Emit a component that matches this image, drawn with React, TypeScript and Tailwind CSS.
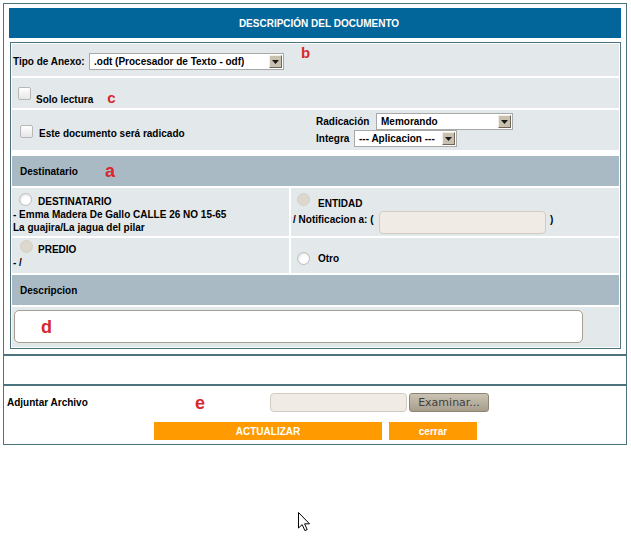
// Document description form (radicación / destinatario / adjuntar archivo)

import clsx from 'clsx'

function Checkbox({ className }: { className?: string }) {
  return (
    <span
      className={clsx(
        'block h-[13px] w-[13px] shrink-0 rounded-[2px] border border-[#b7b7b7] bg-linear-to-b from-white to-[#e6e6e6]',
        className
      )}
    />
  )
}

function Radio({ disabled, className }: { disabled?: boolean; className?: string }) {
  return (
    <span
      className={clsx(
        'block h-[13px] w-[13px] shrink-0 rounded-full border',
        disabled
          ? 'border-[#d5d0c5] bg-[#dcd8ce]'
          : 'border-[#bcbcbc] bg-white shadow-[inset_1px_1px_2px_rgba(0,0,0,0.12)]',
        className
      )}
    />
  )
}

function FakeSelect({ value, className }: { value: string; className: string }) {
  return (
    <div
      className={clsx(
        'flex h-[17px] items-center justify-between border border-[#a8a8a8] bg-white pl-[4px] pr-[1px]',
        className
      )}
    >
      <span className="truncate">{value}</span>
      <span className="flex h-[13px] w-[13px] shrink-0 items-center justify-center border border-t-[#f4f0e8] border-l-[#f4f0e8] border-r-[#6e6759] border-b-[#6e6759] bg-[#c9c0af]">
        <svg width="7" height="4" viewBox="0 0 7 4">
          <path d="M0 0h7L3.5 4z" fill="#1a1a1a" />
        </svg>
      </span>
    </div>
  )
}

const mark = "font-['Liberation_Sans',Arial,sans-serif] font-bold leading-none text-[#d7282e]"

export default function App() {
  return (
    <div className="relative h-[542px] w-[631px] bg-white pt-[3px] font-['Liberation_Sans',Arial,sans-serif] text-[10px] leading-[13px] font-bold text-black">
      <div className="ml-[3px] w-[624px] border border-[#4d737e]">
        {/* Section A: document description */}
        <div className="border-b-2 border-[#4d737e] px-[5px] pt-[4px] pb-[5px]">
          <div className="flex h-[30px] items-center justify-center bg-[#03669a] pl-[8px] text-white">
            DESCRIPCIÓN DEL DOCUMENTO
          </div>

          <div className="mt-[4px] ml-[1px] flex flex-col gap-[2px] border border-[#4d737e] p-[1px]">
            {/* Tipo de anexo */}
            <div className="flex h-[32px] items-center bg-[#e3e8eb] pt-[3px] pl-[1px]">
              <span className="w-[76px]">Tipo de Anexo:</span>
              <FakeSelect value=".odt (Procesador de Texto - odf)" className="w-[195px]" />
              <span className={clsx(mark, 'ml-[17px] -mt-[2px] self-start text-[15px]')}>b</span>
            </div>

            {/* Solo lectura */}
            <div className="flex h-[30px] items-start bg-[#e3e8eb] pt-[9px] pl-[6px]">
              <Checkbox />
              <span className="mt-[3px] ml-[5px] flex items-baseline">
                Solo lectura
                <span className={clsx(mark, 'ml-[14px] text-[15px]')}>c</span>
              </span>
            </div>

            {/* Radicado */}
            <div className="flex h-[40px] bg-[#e3e8eb]">
              <div className="flex w-[304px] items-start pt-[15px] pl-[8px]">
                <Checkbox />
                <span className="mt-[2px] ml-[6px]">Este documento será radicado</span>
              </div>
              <div className="flex flex-col pt-[3px]">
                <div className="flex h-[17px] items-center">
                  <span className="w-[60px]">Radicación</span>
                  <FakeSelect value="Memorando" className="w-[137px]" />
                </div>
                <div className="flex h-[17px] items-center">
                  <span className="w-[38px]">Integra</span>
                  <FakeSelect value="--- Aplicacion ---" className="w-[103px]" />
                </div>
              </div>
            </div>

            <div className="h-[2px] bg-white" />

            {/* Destinatario */}
            <div className="flex h-[30px] items-center bg-[#a9bac5] pl-[8px]">
              <span className="w-[85px]">Destinatario</span>
              <span className={clsx(mark, 'text-[18px]')}>a</span>
            </div>

            <div className="grid h-[48px] grid-cols-[277px_1fr] gap-[2px]">
              <div className="flex flex-col bg-[#e3e8eb] pt-[5px] pl-[1px]">
                <div className="flex items-start">
                  <Radio className="ml-[6px]" />
                  <span className="mt-[2px] ml-[6px]">DESTINATARIO</span>
                </div>
                <span>- Emma Madera De Gallo CALLE 26 NO 15-65</span>
                <span>La guajira/La jagua del pilar</span>
              </div>
              <div className="flex flex-col bg-[#e3e8eb] pt-[5px] pl-[2px]">
                <div className="flex items-start">
                  <Radio disabled className="ml-[4px]" />
                  <span className="mt-[4px] ml-[8px]">ENTIDAD</span>
                </div>
                <div className="mt-[1px] flex items-start">
                  <span className="mt-[2px] w-[86px]">/ Notificacion a: (</span>
                  <span className="block h-[23px] w-[167px] rounded-[4px] border border-[#d2ccc0] bg-[#f0ece5]" />
                  <span className="mt-[2px] ml-[4px]">)</span>
                </div>
              </div>
            </div>

            <div className="grid h-[35px] grid-cols-[277px_1fr] gap-[2px]">
              <div className="flex flex-col bg-[#e3e8eb] pt-[2px] pl-[1px]">
                <div className="flex items-start">
                  <Radio disabled className="ml-[7px]" />
                  <span className="mt-[3px] ml-[5px]">PREDIO</span>
                </div>
                <span>- /</span>
              </div>
              <div className="flex items-center bg-[#e3e8eb] pt-[6px] pl-[6px]">
                <Radio />
                <span className="ml-[8px]">Otro</span>
              </div>
            </div>

            {/* Descripcion */}
            <div className="flex h-[30px] items-center bg-[#a9bac5] pl-[8px]">Descripcion</div>

            <div className="h-[40px] bg-[#e3e8eb] pt-[3px] pl-[2px]">
              <div className="flex h-[33px] w-[569px] items-center rounded-[5px] border border-[#a89f93] bg-white pl-[26px]">
                <span className={clsx(mark, 'text-[18px]')}>d</span>
              </div>
            </div>
          </div>
        </div>

        {/* Section B: empty */}
        <div className="h-[30px] border-b-2 border-[#4d737e]" />

        {/* Section C: attachment + actions */}
        <div className="pt-[7px] pb-[4px]">
          <div className="flex h-[19px] items-center pl-[3px]">
            <span className="w-[188px]">Adjuntar Archivo</span>
            <span className={clsx(mark, 'w-[75px] text-[18px]')}>e</span>
            <span className="block h-[19px] w-[137px] rounded-[4px] border border-[#d2ccc0] bg-[#f0ece5]" />
            <span className="ml-[2px] flex h-[19px] w-[80px] items-center justify-center rounded-[3px] border border-[#8d8574] bg-linear-to-b from-[#cbc3b3] to-[#a69d8b] font-['DejaVu_Sans',sans-serif] text-[11px] font-normal text-[#3e3e3e]">
              Examinar...
            </span>
          </div>
          <div className="mt-[10px] flex h-[18px] pl-[150px] text-white">
            <span className="flex w-[228px] items-center justify-center bg-[#ff9a00]">ACTUALIZAR</span>
            <span className="ml-[7px] flex w-[88px] items-center justify-center bg-[#ff9a00]">cerrar</span>
          </div>
        </div>
      </div>

      {/* mouse pointer */}
      <svg className="absolute top-[512px] left-[298px]" width="13" height="20" viewBox="0 0 13 20">
        <path
          d="M0.5 0.5 L0.5 16 L4.2 12.6 L6.9 18.6 L9.2 17.6 L6.6 11.8 L11.5 11.8 Z"
          fill="white"
          stroke="black"
          strokeWidth="1"
          strokeLinejoin="miter"
        />
      </svg>
    </div>
  )
}
